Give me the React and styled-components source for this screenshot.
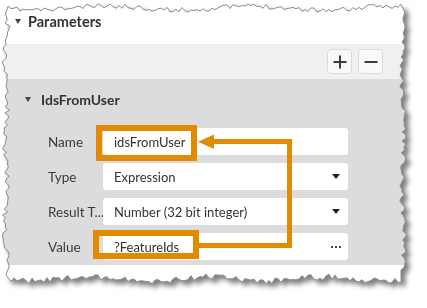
import React from "react";
import styled, { createGlobalStyle } from "styled-components";

const ORANGE = "#e38b00";

const GlobalStyle = createGlobalStyle`
  html, body {
    margin: 0;
    padding: 0;
    background: #fff;
  }
  body {
    font-family: "Segoe UI", Lato, "Noto Sans", sans-serif;
    color: #333;
  }
`;

const Stage = styled.div`
  position: relative;
  width: 427px;
  height: 308px;
  overflow: hidden;
  background: #fff;
`;

const PaperShadow = styled.div`
  position: relative;
  width: 412px;
  height: 292px;
  filter: drop-shadow(4px 4px 2.5px rgba(0, 0, 0, 0.5));
`;

const Paper = styled.div`
  width: 100%;
  height: 100%;
  background: #fff;
  display: flex;
  flex-direction: column;
`;

const Caret = styled.span`
  width: 0;
  height: 0;
  border-left: ${p => p.size / 2}px solid transparent;
  border-right: ${p => p.size / 2}px solid transparent;
  border-top: ${p => p.h || 4}px solid ${p => p.color || "#444"};
  flex: none;
`;

const PanelTitle = styled.div`
  height: 44px;
  box-sizing: border-box;
  display: flex;
  align-items: center;
  gap: 7px;
  padding: 0 0 2px 15px;
  font-size: 14.5px;
  font-weight: 700;
  color: #333;
`;

const Toolbar = styled.div`
  height: 35px;
  background: #f0f0f0;
  display: flex;
  justify-content: flex-end;
  align-items: center;
  gap: 6px;
  padding-right: 29px;
`;

const ToolButton = styled.button`
  width: 25px;
  height: 25px;
  box-sizing: border-box;
  padding: 0;
  border: 1px solid #dadada;
  border-radius: 4px;
  background: #f9f9f9;
  display: flex;
  align-items: center;
  justify-content: center;
  color: #3c3c3c;
`;

const Section = styled.div`
  height: 186px;
  background: #dcdcde;
  display: flex;
  flex-direction: column;
`;

const SectionHeader = styled.div`
  height: 40px;
  display: flex;
  align-items: center;
  gap: 10px;
  padding-left: 25px;
  font-size: 14px;
  font-weight: 700;
  color: #333;
`;

const Form = styled.div`
  display: grid;
  grid-template-columns: 55px 245px;
  grid-auto-rows: 27px;
  row-gap: 8px;
  align-items: center;
  padding: 9px 0 0 48px;
`;

const Label = styled.div`
  font-size: 13.5px;
  color: #3a3a3a;
  white-space: nowrap;
`;

const Field = styled.div`
  height: 27px;
  box-sizing: border-box;
  background: #fff;
  border-radius: 3px;
  display: flex;
  align-items: center;
  justify-content: space-between;
  padding: 0 ${p => p.pr || 8}px 0 11px;
  font-size: 13px;
  color: #333;
`;

const Dots = styled.span`
  display: flex;
  gap: 2px;
  span {
    width: 2px;
    height: 2px;
    background: #444;
  }
`;

const Footer = styled.div`
  flex: 1;
  background: #fff;
`;

const Overlay = styled.svg`
  position: absolute;
  left: 0;
  top: 0;
  pointer-events: none;
`;

// torn paper outline, seeded so it draws the same every time
function makeEdge() {
  let s = 11;
  const rnd = () => {
    s = (s * 16807) % 2147483647;
    return s / 2147483647;
  };
  const jag = a => (rnd() - 0.5) * a;
  const pts = [];
  for (let x = 8; x <= 401; x += 3) pts.push([x, 8 + jag(5) + 2 * Math.sin(x / 23)]);
  for (let y = 12; y <= 275; y += 3) pts.push([403 + jag(5) + 1.5 * Math.sin(y / 17), y]);
  for (let x = 401; x >= 9; x -= 3) pts.push([x, 279 + jag(6) + 2 * Math.sin(x / 19)]);
  for (let y = 275; y >= 12; y -= 3) pts.push([6 + jag(5) + 1.5 * Math.sin(y / 13), y]);
  return pts.map(([x, y]) => [x.toFixed(1), y.toFixed(1)]);
}

const edge = makeEdge();
const clip = `polygon(${edge.map(([x, y]) => `${x}px ${y}px`).join(", ")})`;
const outline = edge.map(([x, y]) => `${x},${y}`).join(" ");

const App = () => (
  <Stage>
    <GlobalStyle />
    <PaperShadow>
      <Paper style={{ clipPath: clip }}>
        <PanelTitle>
          <Caret size={7} h={5} />
          Parameters
        </PanelTitle>
        <Toolbar>
          <ToolButton aria-label="Add">
            <svg width="14" height="14" viewBox="0 0 14 14">
              <path d="M7 0.5v13M0.5 7h13" stroke="currentColor" strokeWidth="2" />
            </svg>
          </ToolButton>
          <ToolButton aria-label="Remove">
            <svg width="14" height="14" viewBox="0 0 14 14">
              <path d="M0.5 7h13" stroke="currentColor" strokeWidth="2" />
            </svg>
          </ToolButton>
        </Toolbar>
        <Section>
          <SectionHeader>
            <Caret size={7} h={5} />
            IdsFromUser
          </SectionHeader>
          <Form>
            <Label>Name</Label>
            <Field>idsFromUser</Field>
            <Label>Type</Label>
            <Field>
              Expression
              <Caret size={9} h={5} color="#222" />
            </Field>
            <Label>Result T...</Label>
            <Field>
              Number (32 bit integer)
              <Caret size={9} h={5} color="#222" />
            </Field>
            <Label>Value</Label>
            <Field pr={7}>
              ?FeatureIds
              <Dots>
                <span />
                <span />
                <span />
              </Dots>
            </Field>
          </Form>
        </Section>
        <Footer />
      </Paper>
      <Overlay width="412" height="292">
        <polygon points={outline} fill="none" stroke="#8c8c8c" strokeWidth="1" />
      </Overlay>
    </PaperShadow>
    <Overlay width="427" height="308">
      <rect x="99" y="128" width="95" height="30" fill="none" stroke={ORANGE} strokeWidth="6" />
      <rect x="96" y="233" width="100" height="23" fill="none" stroke={ORANGE} strokeWidth="6" />
      <path
        d="M199 245.5H289.5V141.5H212"
        fill="none"
        stroke={ORANGE}
        strokeWidth="5"
        strokeLinejoin="miter"
      />
      <polygon points="198,141.7 214,134.5 214,149" fill={ORANGE} />
    </Overlay>
  </Stage>
);

export default App;
